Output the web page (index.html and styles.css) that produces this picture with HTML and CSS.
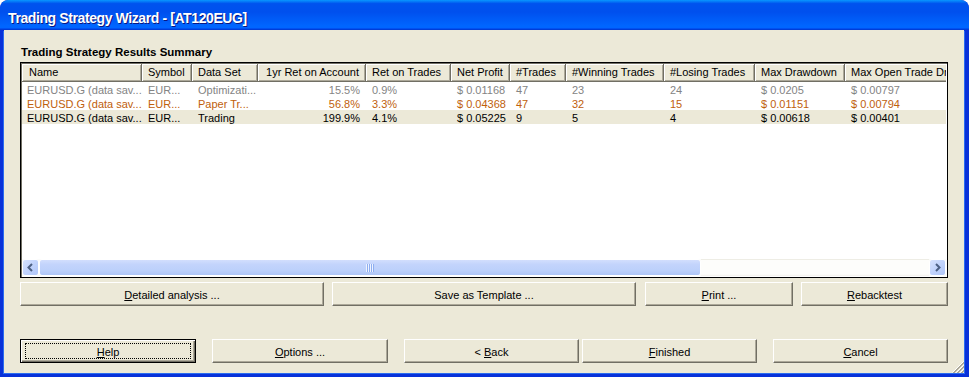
FILE: index.html
```html
<!DOCTYPE html>
<html>
<head>
<meta charset="utf-8">
<link rel="stylesheet" href="styles.css">
</head>
<body>
<div class="window">
  <div class="titlebar"><span class="title">Trading Strategy Wizard - [AT120EUG]</span></div>
  <div class="client">
    <div class="heading">Trading Strategy Results Summary</div>
    <div class="list">
      <div class="grid-wrap">
        <div class="row head">
          <div class="hc first">Name</div>
          <div class="hc">Symbol</div>
          <div class="hc">Data Set</div>
          <div class="hc num">1yr Ret on Account</div>
          <div class="hc">Ret on Trades</div>
          <div class="hc">Net Profit</div>
          <div class="hc">#Trades</div>
          <div class="hc">#Winning Trades</div>
          <div class="hc">#Losing Trades</div>
          <div class="hc">Max Drawdown</div>
          <div class="hc">Max Open Trade Drawdown</div>
        </div>
        <div class="rows">
          <div class="row data gray">
            <div class="c first">EURUSD.G (data sav...</div>
            <div class="c">EUR...</div>
            <div class="c">Optimizati...</div>
            <div class="c num">15.5%</div>
            <div class="c">0.9%</div>
            <div class="c">$ 0.01168</div>
            <div class="c">47</div>
            <div class="c">23</div>
            <div class="c">24</div>
            <div class="c">$ 0.0205</div>
            <div class="c">$ 0.00797</div>
          </div>
          <div class="row data orange">
            <div class="c first">EURUSD.G (data sav...</div>
            <div class="c">EUR...</div>
            <div class="c">Paper Tr...</div>
            <div class="c num">56.8%</div>
            <div class="c">3.3%</div>
            <div class="c">$ 0.04368</div>
            <div class="c">47</div>
            <div class="c">32</div>
            <div class="c">15</div>
            <div class="c">$ 0.01151</div>
            <div class="c">$ 0.00794</div>
          </div>
          <div class="row data selected">
            <div class="c first">EURUSD.G (data sav...</div>
            <div class="c">EUR...</div>
            <div class="c">Trading</div>
            <div class="c num">199.9%</div>
            <div class="c">4.1%</div>
            <div class="c">$ 0.05225</div>
            <div class="c">9</div>
            <div class="c">5</div>
            <div class="c">4</div>
            <div class="c">$ 0.00618</div>
            <div class="c">$ 0.00401</div>
          </div>
        </div>
      </div>
      <div class="hscroll">
        <div class="sb-btn"><svg width="15" height="15" viewBox="0 0 15 15"><polyline points="9,4 5.5,7.5 9,11" fill="none" stroke="#4d6185" stroke-width="2"/></svg></div>
        <div class="thumb"><span class="grip"></span></div>
        <div class="track"></div>
        <div class="sb-btn"><svg width="15" height="15" viewBox="0 0 15 15"><polyline points="6,4 9.5,7.5 6,11" fill="none" stroke="#4d6185" stroke-width="2"/></svg></div>
      </div>
    </div>
    <div class="btnrow top">
      <div class="btn w304"><span><u>D</u>etailed analysis ...</span></div>
      <div class="btn w304"><span>Save as Template ...</span></div>
      <div class="btn w148"><span><u>P</u>rint ...</span></div>
      <div class="btn w147"><span><u>R</u>ebacktest</span></div>
    </div>
    <div class="btnrow bottom">
      <div class="btn w176 default"><span><u>H</u>elp</span></div>
      <div class="btn w176"><span><u>O</u>ptions ...</span></div>
      <div class="btn w175"><span>&lt; <u>B</u>ack</span></div>
      <div class="btn w175"><span><u>F</u>inished</span></div>
      <div class="btn w175"><span><u>C</u>ancel</span></div>
    </div>
    <svg class="sizegrip" width="12" height="12" viewBox="0 0 12 12">
      <g stroke-width="1">
        <line x1="11.5" y1="0.5" x2="0.5" y2="11.5" stroke="#fff"/>
        <line x1="12" y1="1" x2="1" y2="12" stroke="#aca899"/>
        <line x1="12" y1="2" x2="2" y2="12" stroke="#aca899"/>
        <line x1="11.5" y1="4.5" x2="4.5" y2="11.5" stroke="#fff"/>
        <line x1="12" y1="5" x2="5" y2="12" stroke="#aca899"/>
        <line x1="12" y1="6" x2="6" y2="12" stroke="#aca899"/>
        <line x1="11.5" y1="8.5" x2="8.5" y2="11.5" stroke="#fff"/>
        <line x1="12" y1="9" x2="9" y2="12" stroke="#aca899"/>
        <line x1="12" y1="10" x2="10" y2="12" stroke="#aca899"/>
      </g>
    </svg>
  </div>
</div>
</body>
</html>
```

FILE: styles.css
```css
html, body {
  margin: 0;
  padding: 0;
  background: #ffffff;
}
body {
  width: 969px;
  height: 377px;
  overflow: hidden;
  font-family: "Liberation Sans", Arial, sans-serif;
  font-size: 11px;
  color: #000;
}
.window {
  width: 969px;
  height: 377px;
  display: flex;
  flex-direction: column;
  background: #0831d9;
  border-radius: 8px 8px 0 0;
  overflow: hidden;
}
.titlebar {
  height: 30px;
  box-sizing: border-box;
  padding: 6px 0 0 8px;
  line-height: 24px;
  flex: none;
  background: linear-gradient(180deg, #0997ff 0%, #0053ee 12%, #0050ee 40%, #0066ff 86%, #0066ff 92%, #005bff 94%, #003dd7 97%, #003dd7 100%);
  border-radius: 8px 8px 0 0;
}
.title {
  color: #fff;
  font-weight: bold;
  font-size: 14px;
  letter-spacing: -0.4px;
  text-shadow: 1px 1px 0 #0a1883;
  white-space: nowrap;
}
.client {
  position: relative;
  flex: 1;
  margin: 0 5px 4px 4px;
  background: #ece9d8;
  padding: 16px 16px 0 16px;
  display: flex;
  flex-direction: column;
  box-shadow: -1px 1px 0 #2a6cf0, 1px 1px 0 #2a6cf0;
}
.heading {
  font-weight: bold;
  font-size: 11.5px;
  line-height: 13px;
  height: 13px;
  margin: 0 0 3px 1px;
  white-space: nowrap;
}
.list {
  width: 928px;
  height: 216px;
  box-sizing: border-box;
  border: 1px solid #000;
  padding: 1px 1px 1px 1px;
  background: #fff;
  box-shadow: inset 1px 1px 0 #716f64;
  display: flex;
  flex-direction: column;
}
.grid-wrap {
  flex: 1;
  overflow: hidden;
  display: flex;
  flex-direction: column;
}
.row {
  display: grid;
  grid-template-columns: 120px 50px 66px 108px 85px 59px 56px 98px 91px 90px 140px;
  width: max-content;
}
.hc {
  height: 18px;
  box-sizing: border-box;
  background: #ece9d8;
  border-right: 1px solid #716f64;
  border-bottom: 1px solid #716f64;
  box-shadow: inset 1px 1px 0 #fff, inset -1px -1px 0 #aca899;
  padding: 0 6px 0 6px;
  line-height: 17px;
  white-space: nowrap;
  overflow: hidden;
}
.hc.first {
  padding-left: 7px;
}
.num {
  text-align: right;
}
.rows {
  flex: 1;
}
.c {
  height: 14px;
  box-sizing: border-box;
  padding: 2px 6px 0 6px;
  line-height: 12px;
  white-space: nowrap;
  overflow: hidden;
}
.c.first {
  padding-left: 5px;
}
.gray {
  color: #848484;
}
.orange {
  color: #c0600c;
}
.selected {
  background: #ece9d8;
}
.hscroll {
  flex: none;
  height: 17px;
  display: flex;
  background: #fbfbf9;
}
.sb-btn {
  width: 17px;
  height: 17px;
  box-sizing: border-box;
  border: 1px solid #ffffff;
  border-radius: 3px;
  background: linear-gradient(135deg, #d6e2fe 0%, #c1d3fc 50%, #b0c6f8 100%);
  display: flex;
  align-items: center;
  justify-content: center;
}
.thumb {
  width: 662px;
  height: 17px;
  box-sizing: border-box;
  border: 1px solid #ffffff;
  border-radius: 3px;
  background: linear-gradient(180deg, #d2defd 0%, #c3d4fc 30%, #bcd0fb 70%, #afc6f7 100%);
  display: flex;
  align-items: center;
  justify-content: center;
}
.grip {
  width: 8px;
  height: 8px;
  background: repeating-linear-gradient(90deg, #eef3ff 0 1px, #8eaef0 1px 2px);
}
.track {
  flex: 1;
  background: linear-gradient(180deg, #eeede5 0, #eeede5 1px, #fdfdfb 1px, #fdfdfb 15px, #f3f1ec 17px);
}
.btnrow {
  display: flex;
  width: 928px;
}
.btnrow.top {
  margin-top: 4px;
}
.btnrow.top .btn:nth-child(2) { margin-left: 8px; }
.btnrow.top .btn:nth-child(3) { margin-left: 9px; }
.btnrow.top .btn:nth-child(4) { margin-left: 8px; }
.btnrow.bottom {
  margin-top: 33px;
}
.btnrow.bottom .btn:nth-child(2) { margin-left: 16px; }
.btnrow.bottom .btn:nth-child(3) { margin-left: 16px; }
.btnrow.bottom .btn:nth-child(4) { margin-left: 3px; }
.btnrow.bottom .btn:nth-child(5) { margin-left: 16px; }
.btn {
  position: relative;
  height: 24px;
  box-sizing: border-box;
  border: 1px solid;
  border-color: #ffffff #716f64 #716f64 #ffffff;
  box-shadow: inset -1px -1px 0 #aca899;
  background: #ece9d8;
  display: flex;
  align-items: center;
  justify-content: center;
  padding-top: 1px;
  white-space: nowrap;
}
.btn.default {
  border: 1px solid #000;
  box-shadow: inset 1px 1px 0 #fff, inset -1px -1px 0 #716f64, inset -2px -2px 0 #aca899;
}
.btn.default::after {
  content: "";
  position: absolute;
  left: 4px;
  top: 3px;
  right: 4px;
  bottom: 3px;
  border: 1px dotted #000;
}
.w304 { width: 304px; }
.w148 { width: 148px; }
.w147 { width: 147px; }
.w176 { width: 176px; }
.w175 { width: 175px; }
.sizegrip {
  position: absolute;
  right: 0;
  bottom: 0;
}
```
